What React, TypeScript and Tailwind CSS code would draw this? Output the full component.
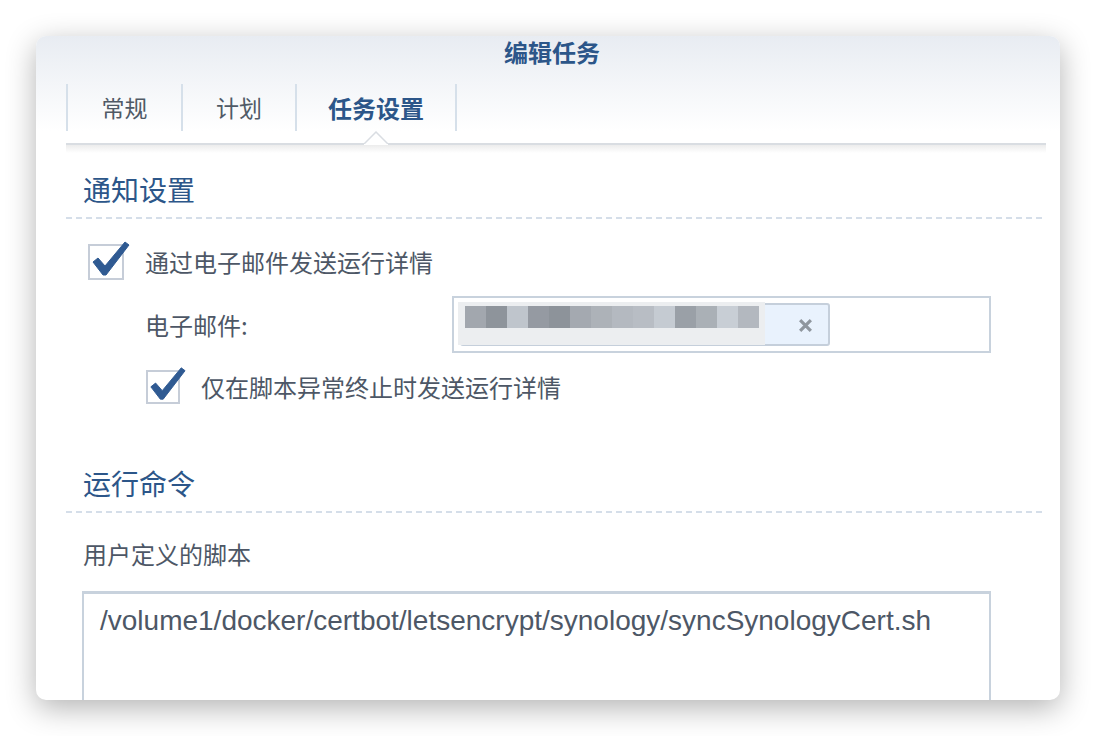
import React from "react";

const CJK = { fontFamily: '"Noto Sans CJK SC", "Noto Sans", sans-serif' };

// ============ CHECKBOX ============
function Checkbox({ size = 36 }: { size?: number }) {
  return (
    <div className="relative shrink-0" style={{ width: size, height: size }}>
      <div className="absolute inset-0 border-2 border-[#c6cdd8] bg-white" />
      <svg
        className="absolute left-[2px] top-[-6px]"
        width={size + 4}
        height={size + 6}
        viewBox="0 0 40 42"
      >
        <path
          d="M3 24 L8 20 L15 28 L35 4 L39 7 L16 37 L13 37 Z"
          fill="#2f5a92"
          stroke="#2f5a92"
          strokeWidth="1"
          strokeLinejoin="round"
        />
      </svg>
    </div>
  );
}

// ============ SECTION HEADER ============
function SectionTitle({ title }: { title: string }) {
  return (
    <div>
      <div className="pl-[17px] text-[28px] leading-[40px] text-[#2c5689]">{title}</div>
      <div className="mt-[8px] h-[2px] w-full bg-[repeating-linear-gradient(90deg,#d5dee9_0px,#d5dee9_6px,transparent_6px,transparent_10px)]" />
    </div>
  );
}

const blurBlocks = [
  "#a2a7ae",
  "#8e949b",
  "#bfc5cc",
  "#959aa2",
  "#8d939a",
  "#a4a9b0",
  "#adb2b8",
  "#b4b9c0",
  "#b8bdc4",
  "#c5cbd2",
  "#9aa0a7",
  "#aab0b6",
  "#c8ced5",
  "#b3b8bf",
];

export default function App() {
  return (
    <div className="min-h-[736px] w-[1096px] bg-white pt-[36px] pl-[36px]" style={CJK}>
      <div className="flex h-[664px] w-[1024px] flex-col rounded-[10px] bg-white shadow-[0_8px_30px_rgba(0,0,0,0.3)]">
        {/* Header */}
        <div className="rounded-t-[10px] bg-[linear-gradient(180deg,#e8ecf2_0%,#ffffff_100%)]">
          <div className="flex h-[32px] items-center justify-center pl-[8px]">
            <span className="text-[24px] font-bold leading-[36px] text-[#2c5689]">编辑任务</span>
          </div>
          {/* Tabs */}
          <div className="mt-[16px] flex pl-[30px]">
            <div className="flex h-[47px] w-[115px] items-center justify-center border-l-2 border-[#d6e0ea] text-[23px] text-[#505a66]">
              常规
            </div>
            <div className="flex h-[47px] w-[114px] items-center justify-center border-l-2 border-[#d6e0ea] text-[23px] text-[#505a66]">
              计划
            </div>
            <div className="relative flex h-[47px] w-[162px] items-center justify-center border-x-2 border-[#d6e0ea] text-[24px] font-bold text-[#2c5689]">
              任务设置
            </div>
          </div>
        </div>

        {/* Tab underline with notch */}
        <div className="relative ml-[30px] mr-[14px] mt-[12px] h-[10px] shrink-0">
          <div className="h-[2px] bg-[#d9dde2]" />
          <div className="h-[8px] bg-[linear-gradient(180deg,#ececec_0%,#ffffff_100%)]" />
          <svg className="absolute left-[298px] top-[-12px]" width="24" height="14" viewBox="0 0 24 14">
            <path d="M0 13 L12 1 L24 13" fill="#ffffff" stroke="#d9dde2" strokeWidth="1.5" />
            <rect x="0" y="13" width="24" height="1" fill="#ffffff" />
          </svg>
        </div>

        {/* Content */}
        <div className="min-h-0 flex-1 overflow-hidden rounded-b-[10px]">
          <div className="ml-[30px] mr-[14px] mt-[16px]">
            <SectionTitle title="通知设置" />

            <div className="mt-[25px] flex items-center pl-[22px]">
              <Checkbox size={36} />
              <span className="ml-[21px] text-[24px] text-[#4d5766]">通过电子邮件发送运行详情</span>
            </div>

            <div className="mt-[16px] flex items-center pl-[79px]">
              <span className="w-[307px] text-[24px] text-[#4d5766]">电子邮件:</span>
              <div className="flex h-[57px] w-[539px] items-center border-2 border-[#c8d2dd] bg-white pl-[6px]">
                <div className="relative flex h-[43px] w-[370px] items-center rounded-[3px] border-2 border-[#c5cfdb] bg-[#e9f2fd]">
                  <div className="absolute left-[-4px] top-[-3px] h-[43px] w-[307px] bg-[#eceef0]" />
                  <div className="absolute left-[3px] top-[1px] flex h-[22px]">
                    {blurBlocks.map((c, i) => (
                      <div key={i} className="h-[22px] w-[21px]" style={{ backgroundColor: c }} />
                    ))}
                  </div>
                  <svg className="absolute left-[336px] top-[13px]" width="15" height="15" viewBox="0 0 14 14">
                    <path d="M2 2 L12 12 M12 2 L2 12" stroke="#8f969e" strokeWidth="3" />
                  </svg>
                </div>
              </div>
            </div>

            <div className="mt-[16px] flex items-center pl-[80px]">
              <Checkbox size={34} />
              <span className="ml-[21px] text-[24px] text-[#4d5766]">仅在脚本异常终止时发送运行详情</span>
            </div>

            <div className="mt-[58px]">
              <SectionTitle title="运行命令" />
            </div>

            <div className="mt-[23px] pl-[17px] text-[24px] leading-[36px] text-[#4d5766]">用户定义的脚本</div>

            <div className="ml-[16px] mt-[19px] h-[140px] w-[909px] border-2 border-t-[3px] border-[#c8d2dd] bg-white px-[16px] pt-[10px]">
              <div
                className="text-[28px] leading-[34px] text-[#4d5766]"
                style={{ fontFamily: '"Liberation Sans", Arial, sans-serif' }}
              >
                /volume1/docker/certbot/letsencrypt/synology/syncSynologyCert.sh
              </div>
            </div>
          </div>
        </div>
      </div>
    </div>
  );
}
